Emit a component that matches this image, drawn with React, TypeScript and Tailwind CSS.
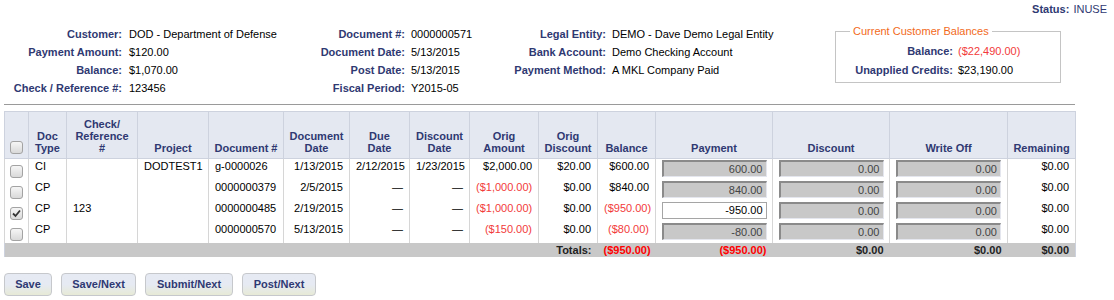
import React from "react";

type Row = {
  type: string;
  ref: string;
  project: string;
  doc: string;
  docDate: string;
  dueDate: string;
  discDate: string;
  origAmount: string;
  origDiscount: string;
  balance: string;
  payment: string;
  checked?: boolean;
};

const rows: Row[] = [
  { type: "CI", ref: "", project: "DODTEST1", doc: "g-0000026", docDate: "1/13/2015", dueDate: "2/12/2015", discDate: "1/23/2015", origAmount: "$2,000.00", origDiscount: "$20.00", balance: "$600.00", payment: "600.00" },
  { type: "CP", ref: "", project: "", doc: "0000000379", docDate: "2/5/2015", dueDate: "—", discDate: "—", origAmount: "($1,000.00)", origDiscount: "$0.00", balance: "$840.00", payment: "840.00" },
  { type: "CP", ref: "123", project: "", doc: "0000000485", docDate: "2/19/2015", dueDate: "—", discDate: "—", origAmount: "($1,000.00)", origDiscount: "$0.00", balance: "($950.00)", payment: "-950.00", checked: true },
  { type: "CP", ref: "", project: "", doc: "0000000570", docDate: "5/13/2015", dueDate: "—", discDate: "—", origAmount: "($150.00)", origDiscount: "$0.00", balance: "($80.00)", payment: "-80.00" },
];

const colWidths = [24, 38, 71, 71, 75, 66, 60, 60, 69, 59, 58, 117, 117, 118, 68];

const money = (v: string) => (v.startsWith("(") ? "text-[#f23a3a]" : "text-black");

const Check = ({ checked }: { checked?: boolean }) => (
  <span className="mx-auto flex h-[13px] w-[13px] items-center justify-center rounded-[3px] border border-[#a3a3a3] bg-gradient-to-b from-[#f6f6f6] to-[#d9d9d9]">
    {checked && (
      <svg width="9" height="9" viewBox="0 0 9 9">
        <path d="M1 4.5 L3.5 7 L8 1.5" fill="none" stroke="#333" strokeWidth="1.8" />
      </svg>
    )}
  </span>
);

const Amount = ({ value, active }: { value: string; active?: boolean }) => (
  <input
    readOnly
    value={value}
    className={
      active
        ? "mx-auto block h-[17px] w-[105px] border border-[#a5a5a5] bg-white pr-[3px] text-right text-[11px] leading-[15px] text-black outline-none"
        : "mx-auto block h-[17px] w-[105px] border-t-2 border-l-2 border-b border-r border-t-[#8a8a8a] border-l-[#8a8a8a] border-b-[#e4e6ee] border-r-[#e4e6ee] bg-[#c8c8c8] pr-[3px] text-right text-[11px] leading-[14px] text-[#444] outline-none"
    }
  />
);

const Field = ({ label, children }: { label: string; children: React.ReactNode }) => (
  <>
    <div className="text-right font-bold text-[#2f3972]">{label}</div>
    <div className="whitespace-nowrap text-black">{children}</div>
  </>
);

const headers: React.ReactNode[] = [
  null,
  <>Doc<br />Type</>,
  <>Check/<br />Reference<br />#</>,
  "Project",
  "Document #",
  <>Document<br />Date</>,
  <>Due<br />Date</>,
  <>Discount<br />Date</>,
  <>Orig<br />Amount</>,
  <>Orig<br />Discount</>,
  "Balance",
  "Payment",
  "Discount",
  "Write Off",
  "Remaining",
];

const buttons = [
  { label: "Save", w: "w-[48px]" },
  { label: "Save/Next", w: "w-[75px]" },
  { label: "Submit/Next", w: "w-[88px]" },
  { label: "Post/Next", w: "w-[74px]" },
];

export default function App() {
  const td = "border-x border-[#d6d6d6] px-[6px] pt-[1px] align-top leading-[13px]";
  return (
    <div className="h-[300px] w-[1114px] bg-white font-['Liberation_Sans',Arial,sans-serif] text-[11px]">
      <div className="flex h-[14px] justify-end pr-[7px] pt-[2px] leading-[14px] text-[#2f3972]">
        <span className="font-bold">Status:</span>
        <span className="ml-[4px]">INUSE</span>
      </div>

      <div className="mt-[10px] flex leading-[18px]">
        <div className="grid grid-cols-[122px_150px] content-start gap-x-[7px] pt-px">
          <Field label="Customer:">DOD - Department of Defense</Field>
          <Field label="Payment Amount:">$120.00</Field>
          <Field label="Balance:">$1,070.00</Field>
          <Field label="Check / Reference #:">123456</Field>
        </div>
        <div className="grid grid-cols-[126px_95px] content-start gap-x-[6px] pt-px">
          <Field label="Document #:">0000000571</Field>
          <Field label="Document Date:">5/13/2015</Field>
          <Field label="Post Date:">5/13/2015</Field>
          <Field label="Fiscal Period:">Y2015-05</Field>
        </div>
        <div className="grid grid-cols-[100px_217px] content-start gap-x-[6px] pt-px">
          <Field label="Legal Entity:">DEMO - Dave Demo Legal Entity</Field>
          <Field label="Bank Account:">Demo Checking Account</Field>
          <Field label="Payment Method:">A MKL Company Paid</Field>
        </div>
        <fieldset className="ml-[6px] h-[59px] w-[226px] self-start border border-[#c4c4c4]">
          <legend className="ml-[14px] px-[3px] leading-[14px] text-[#f26a1b]">Current Customer Balances</legend>
          <div className="mt-[4px] grid grid-cols-[117px_auto] gap-x-[5px] leading-[19px]">
            <Field label="Balance:"><span className="text-[#f23a3a]">($22,490.00)</span></Field>
            <Field label="Unapplied Credits:">$23,190.00</Field>
          </div>
        </fieldset>
      </div>

      <div className="ml-[4px] mt-[7px] h-px w-[1071px] bg-[#9a9a9a]" />

      <table className="ml-[4px] mt-[6px] w-[1071px] table-fixed border-collapse">
        <colgroup>
          {colWidths.map((w, i) => (
            <col key={i} style={{ width: w }} />
          ))}
        </colgroup>
        <thead>
          <tr className="h-[47px]">
            {headers.map((h, i) => (
              <th
                key={i}
                className="border border-[#cdd2de] bg-[#e4e8f1] px-[2px] pb-[4px] text-center align-bottom font-bold leading-[12px] text-[#2f3972]"
              >
                {i === 0 ? <Check /> : h}
              </th>
            ))}
          </tr>
        </thead>
        <tbody className="border-x border-[#cdd2de]">
          {rows.map((r, i) => (
            <tr key={i} className="h-[21px]">
              <td className="border-x border-[#d6d6d6] pt-[6px] align-top">
                <Check checked={r.checked} />
              </td>
              <td className={td}>{r.type}</td>
              <td className={td}>{r.ref}</td>
              <td className={td}>{r.project}</td>
              <td className={td}>{r.doc}</td>
              <td className={`${td} text-right`}>{r.docDate}</td>
              <td className={`${td} text-right`}>{r.dueDate}</td>
              <td className={`${td} text-right`}>{r.discDate}</td>
              <td className={`${td} text-right ${money(r.origAmount)}`}>{r.origAmount}</td>
              <td className={`${td} text-right`}>{r.origDiscount}</td>
              <td className={`${td} text-right ${money(r.balance)}`}>{r.balance}</td>
              <td className="border-x border-[#d6d6d6] pt-[1px] align-top">
                <Amount value={r.payment} active={r.checked} />
              </td>
              <td className="border-x border-[#d6d6d6] pt-[1px] align-top">
                <Amount value="0.00" />
              </td>
              <td className="border-x border-[#d6d6d6] pt-[1px] align-top">
                <Amount value="0.00" />
              </td>
              <td className={`${td} text-right`}>$0.00</td>
            </tr>
          ))}
          <tr className="h-[14px] bg-[#c8c8c8] font-bold leading-[14px] text-[#222]">
            <td colSpan={10} className="px-[6px] text-right">Totals:</td>
            <td className="px-[6px] text-right text-[#ff0000]">($950.00)</td>
            <td className="px-[6px] text-right text-[#ff0000]">($950.00)</td>
            <td className="px-[6px] text-right">$0.00</td>
            <td className="px-[6px] text-right">$0.00</td>
            <td className="px-[6px] text-right">$0.00</td>
          </tr>
        </tbody>
      </table>

      <div className="ml-[4px] mt-[16px] flex gap-[9px]">
        {buttons.map((b) => (
          <button
            key={b.label}
            type="button"
            className={`${b.w} h-[23px] rounded-[4px] border border-[#c6c8cc] bg-gradient-to-b from-[#e6eaf3] via-[#e6eaf3] to-[#e7ead6] text-center font-bold text-[#2f3972]`}
          >
            {b.label}
          </button>
        ))}
      </div>
    </div>
  );
}
